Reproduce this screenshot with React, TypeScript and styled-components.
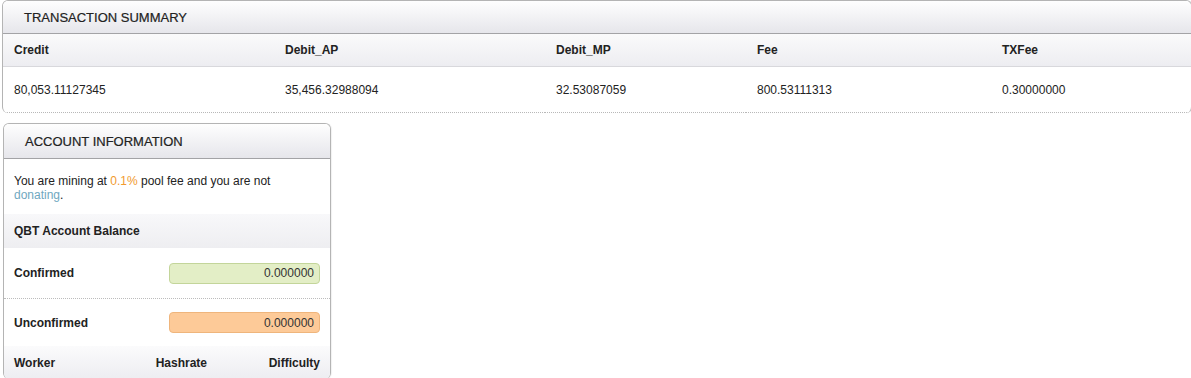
import React from "react";
import styled, { createGlobalStyle } from "styled-components";

const Global = createGlobalStyle`
  html, body { margin: 0; padding: 0; background: #fff; }
  body { font-family: "Liberation Sans", Arial, sans-serif; font-size: 12px; color: #222; }
  * { box-sizing: border-box; }
`;

const Page = styled.div`
  display: flex;
  flex-direction: column;
  align-items: flex-start;
  gap: 10px;
  padding-left: 2px;
`;

const Panel = styled.section<{ $w: number; $ml?: number }>`
  width: ${(p) => p.$w}px;
  margin-left: ${(p) => p.$ml ?? 0}px;
  border: 1px solid #b4b4b4;
  border-bottom: none;
  border-radius: 6px;
  overflow: hidden;
  background: #fff;
  box-shadow: 1px 0 1px rgba(0, 0, 0, 0.06);
`;

const PanelHeader = styled.header<{ $h: number }>`
  height: ${(p) => p.$h}px;
  display: flex;
  align-items: center;
  padding-left: 21px;
  background: linear-gradient(#fefefe, #e6e6eb);
  border-bottom: 1px solid #a3a3a6;
  font-size: 13px;
  color: #222;
  text-transform: uppercase;
  -webkit-text-stroke: 0.2px #222;
`;

const Table = styled.div`
  display: grid;
  grid-template-columns: 271px 271px 201px 245px 1fr;
`;

const HeadCell = styled.div`
  height: 33px;
  display: flex;
  align-items: center;
  padding-left: 11px;
  font-weight: bold;
  background: linear-gradient(#fafafb, #ededf1);
  border-bottom: 1px solid #d8d8dc;
`;

const BodyCell = styled.div`
  height: 46px;
  display: flex;
  align-items: center;
  padding-left: 11px;
  border-bottom: 1px dotted #b8b8b8;
`;

const Intro = styled.p`
  margin: 0;
  padding: 15px 10px 12px 10px;
  line-height: 14px;
`;

const Orange = styled.span`
  color: #f19a2e;
`;

const Link = styled.a`
  color: #6fa8bf;
  text-decoration: none;
`;

const SectionRow = styled.div`
  height: 34px;
  display: flex;
  align-items: center;
  padding-left: 10px;
  font-weight: bold;
  background: linear-gradient(#f8f8fa, #eeeef1);
`;

const BalanceRow = styled.div<{ $dotted?: boolean; $h: number }>`
  height: ${(p) => p.$h}px;
  display: flex;
  align-items: center;
  justify-content: space-between;
  padding: 0 10px;
  font-weight: bold;
  border-bottom: ${(p) => (p.$dotted ? "1px dotted #bcbcbc" : "none")};
`;

const Amount = styled.div<{ $kind: "ok" | "pending" }>`
  width: 151px;
  height: 21px;
  border-radius: 4px;
  display: flex;
  align-items: center;
  justify-content: flex-end;
  padding-right: 5px;
  font-weight: normal;
  color: #333;
  background: ${(p) => (p.$kind === "ok" ? "#e3eec6" : "#fdca98")};
  border: 1px solid ${(p) => (p.$kind === "ok" ? "#c3d59a" : "#efb57c")};
`;

const WorkerHead = styled.div`
  height: 33px;
  display: grid;
  grid-template-columns: 1fr 90px 113px;
  align-items: center;
  padding: 0 10px;
  font-weight: bold;
  background: linear-gradient(#fbfbfc, #ededf1);
`;

const WCell = styled.div<{ $align: "left" | "center" | "right" }>`
  text-align: ${(p) => p.$align};
`;

const heads = ["Credit", "Debit_AP", "Debit_MP", "Fee", "TXFee"];
const vals = ["80,053.11127345", "35,456.32988094", "32.53087059", "800.53111313", "0.30000000"];

export default function App() {
  return (
    <>
      <Global />
      <Page>
        <Panel $w={1190}>
          <PanelHeader $h={33}>Transaction Summary</PanelHeader>
          <Table>
            {heads.map((h) => (
              <HeadCell key={h}>{h}</HeadCell>
            ))}
            {vals.map((v) => (
              <BodyCell key={v}>{v}</BodyCell>
            ))}
          </Table>
        </Panel>
        <Panel $w={328} $ml={1}>
          <PanelHeader $h={35}>Account Information</PanelHeader>
          <Intro>
            You are mining at <Orange>0.1%</Orange> pool fee and you are not{" "}
            <Link href="#">donating</Link>.
          </Intro>
          <SectionRow>QBT Account Balance</SectionRow>
          <BalanceRow $h={51} $dotted>
            Confirmed
            <Amount $kind="ok">0.000000</Amount>
          </BalanceRow>
          <BalanceRow $h={47}>
            Unconfirmed
            <Amount $kind="pending">0.000000</Amount>
          </BalanceRow>
          <WorkerHead>
            <WCell $align="left">Worker</WCell>
            <WCell $align="right">Hashrate</WCell>
            <WCell $align="right">Difficulty</WCell>
          </WorkerHead>
        </Panel>
      </Page>
    </>
  );
}
